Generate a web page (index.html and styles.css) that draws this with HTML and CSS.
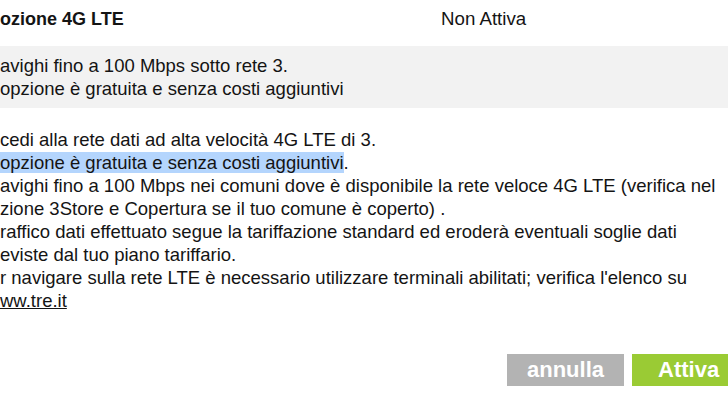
FILE: index.html
```html
<!DOCTYPE html>
<html lang="it">
<head>
    <meta charset="UTF-8">
    <meta name="viewport" content="width=device-width, initial-scale=1.0">
    <title>Opzione 4G LTE</title>
    <link rel="stylesheet" href="styles.css">
</head>
<body>
    <div class="page">
        <div class="header">
            <h2 class="title">ozione 4G LTE</h2>
            <span class="status">Non Attiva</span>
        </div>

        <div class="summary">
            avighi fino a 100 Mbps sotto rete 3.<br>
            opzione è gratuita e senza costi aggiuntivi
        </div>

        <div class="details">
            cedi alla rete dati ad alta velocità 4G LTE di 3.<br>
            <span class="selected">opzione è gratuita e senza costi aggiuntivi</span>.<br>
            avighi fino a 100 Mbps nei comuni dove è disponibile la rete veloce 4G LTE (verifica nel<br>
            zione 3Store e Copertura se il tuo comune è coperto) .<br>
            raffico dati effettuato segue la tariffazione standard ed eroderà eventuali soglie dati<br>
            eviste dal tuo piano tariffario.<br>
            r navigare sulla rete LTE è necessario utilizzare terminali abilitati; verifica l'elenco su<br>
            <a href="#" class="link">ww.tre.it</a>
        </div>

        <div class="actions">
            <button class="btn btn-cancel">annulla</button>
            <button class="btn btn-confirm">Attiva</button>
        </div>
    </div>
</body>
</html>
```

FILE: styles.css
```css
body {
    margin: 0;
    padding: 0;
    background-color: #fff;
    font-family: "Liberation Sans", Arial, sans-serif;
    color: #141414;
}
.page {
    width: 728px;
    height: 405px;
    overflow: hidden;
}
.header {
    display: grid;
    grid-template-columns: 441px auto;
    align-items: baseline;
    padding-top: 8px;
    height: 38px;
}
.title {
    margin: 0;
    font-size: 18px;
    font-weight: bold;
    white-space: nowrap;
}
.status {
    font-size: 18.7px;
}
.summary {
    background-color: #f2f2f2;
    font-size: 18.5px;
    line-height: 23px;
    padding: 8px 0 8px 0;
    height: 46px;
    white-space: nowrap;
}
.details {
    font-size: 18.5px;
    line-height: 23px;
    padding-top: 20px;
    white-space: nowrap;
}
.selected {
    background-color: #b4d5fd;
}
.link {
    color: #141414;
    text-decoration: underline;
}
.actions {
    display: flex;
    gap: 8px;
    padding-left: 507px;
    margin-top: 42px;
}
.btn {
    font-family: "Liberation Sans", Arial, sans-serif;
    font-size: 22px;
    font-weight: bold;
    color: #fff;
    border: none;
    height: 32px;
    padding: 0 20px;
    cursor: pointer;
    flex-shrink: 0;
}
.btn-cancel {
    background-color: #b3b3b3;
    width: 117px;
}
.btn-confirm {
    background-color: #9acb34;
    padding-left: 26px;
    width: 110px;
    text-align: left;
}
```
